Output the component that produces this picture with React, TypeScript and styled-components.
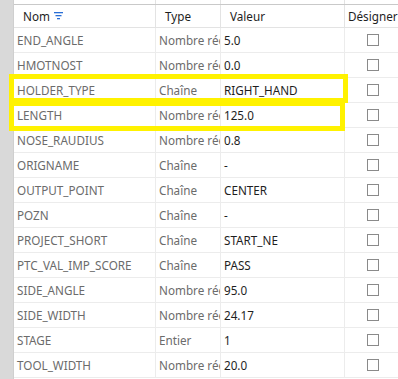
import React from "react";
import styled, { createGlobalStyle } from "styled-components";

const Global = createGlobalStyle`
  html, body { margin: 0; padding: 0; background: #fff; }
  body { font-family: "Noto Sans", "Open Sans", sans-serif; }
`;

const COLS = "142px 65px 124px 1fr";

const Page = styled.div`
  position: relative;
  display: flex;
  width: 398px;
  height: 379px;
  overflow: hidden;
  background: #fff;
`;

const Gutter = styled.div`
  width: 13px;
  flex: none;
  background: #d9d9d9;
  border-right: 1px solid #cfcfcf;
`;

const Table = styled.div`
  flex: 1;
  display: flex;
  flex-direction: column;
  min-width: 0;
`;

const TopStrip = styled.div`
  height: 4px;
  border-bottom: 1px solid #c9c9c9;
  display: grid;
  grid-template-columns: ${COLS};
`;

const Header = styled.div`
  height: 22px;
  display: grid;
  grid-template-columns: ${COLS};
  border-bottom: 1px solid #e3e3e3;
`;

const HeadCell = styled.div<{ $pad?: number }>`
  display: flex;
  align-items: center;
  gap: 4px;
  padding-left: ${(p) => p.$pad ?? 9}px;
  font-size: 11.7px;
  color: #1e1e1e;
  border-right: 1px solid #e3e3e3;
  white-space: nowrap;
  overflow: hidden;
  &:last-child { border-right: none; }
`;

const StripCell = styled.div`
  border-right: 1px solid #e3e3e3;
  &:last-child { border-right: none; }
`;

const Row = styled.div`
  height: 24px;
  display: grid;
  grid-template-columns: ${COLS};
  border-bottom: 1px solid #ececec;
`;

const Cell = styled.div<{ $tone?: "muted" | "dark" }>`
  display: flex;
  align-items: center;
  padding-left: 3px;
  font-size: 11.7px;
  color: ${(p) => (p.$tone === "dark" ? "#1e1e1e" : "#6b6b6b")};
  border-right: 1px solid #ececec;
  white-space: nowrap;
  overflow: hidden;
  &:last-child { border-right: none; }
`;

const CheckCell = styled.div`
  display: flex;
  align-items: center;
  justify-content: center;
  padding-left: 2px;
`;

const Check = styled.span`
  width: 10px;
  height: 10px;
  border: 1px solid #8a8a8a;
  background: #fff;
`;

const Highlight = styled.div`
  position: absolute;
  border: 5px solid #fff200;
  box-sizing: border-box;
  pointer-events: none;
`;

const FilterIcon = () => (
  <svg width="9" height="8" viewBox="0 0 9 8">
    <rect x="0" y="0" width="9" height="1.3" fill="#2a6fd6" />
    <rect x="1.5" y="3" width="6" height="1.3" fill="#2a6fd6" />
    <rect x="3" y="6" width="3" height="1.3" fill="#2a6fd6" />
  </svg>
);

const rows: [string, string, string][] = [
  ["END_ANGLE", "Nombre réel", "5.0"],
  ["HMOTNOST", "Nombre réel", "0.0"],
  ["HOLDER_TYPE", "Chaîne", "RIGHT_HAND"],
  ["LENGTH", "Nombre réel", "125.0"],
  ["NOSE_RAUDIUS", "Nombre réel", "0.8"],
  ["ORIGNAME", "Chaîne", "-"],
  ["OUTPUT_POINT", "Chaîne", "CENTER"],
  ["POZN", "Chaîne", "-"],
  ["PROJECT_SHORT", "Chaîne", "START_NE"],
  ["PTC_VAL_IMP_SCORE", "Chaîne", "PASS"],
  ["SIDE_ANGLE", "Nombre réel", "95.0"],
  ["SIDE_WIDTH", "Nombre réel", "24.17"],
  ["STAGE", "Entier", "1"],
  ["TOOL_WIDTH", "Nombre réel", "20.0"],
];

export default function App() {
  return (
    <>
      <Global />
      <Page>
        <Gutter />
        <Table>
          <TopStrip>
            <StripCell />
            <StripCell />
            <StripCell />
            <StripCell />
          </TopStrip>
          <Header>
            <HeadCell>
              Nom <FilterIcon />
            </HeadCell>
            <HeadCell>Type</HeadCell>
            <HeadCell>Valeur</HeadCell>
            <HeadCell $pad={3}>Désigner</HeadCell>
          </Header>
          {rows.map(([name, type, value]) => (
            <Row key={name}>
              <Cell>{name}</Cell>
              <Cell>{type}</Cell>
              <Cell $tone="dark">{value}</Cell>
              <CheckCell>
                <Check />
              </CheckCell>
            </Row>
          ))}
        </Table>
        <Highlight style={{ left: 9, top: 74, width: 339, height: 29 }} />
        <Highlight style={{ left: 9, top: 101, width: 336, height: 30 }} />
      </Page>
    </>
  );
}
